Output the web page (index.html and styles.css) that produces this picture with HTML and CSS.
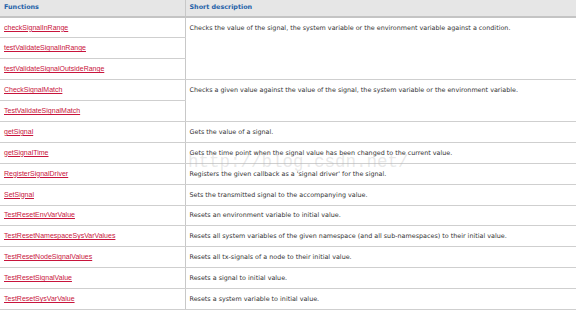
FILE: index.html
```html
<!DOCTYPE html>
<html lang="en">
<head>
    <meta charset="UTF-8">
    <title>Functions</title>
    <link rel="stylesheet" href="styles.css">
</head>
<body>
    <div class="wrap">
        <table class="func-table">
            <thead>
                <tr>
                    <th class="col-name">Functions</th>
                    <th>Short description</th>
                </tr>
            </thead>
            <tbody>
                <tr>
                    <td><a href="#">checkSignalInRange</a></td>
                    <td rowspan="3" class="top">Checks the value of the signal, the system variable or the environment variable against a condition.</td>
                </tr>
                <tr><td><a href="#">testValidateSignalInRange</a></td></tr>
                <tr><td><a href="#">testValidateSignalOutsideRange</a></td></tr>
                <tr>
                    <td><a href="#">CheckSignalMatch</a></td>
                    <td rowspan="2" class="top">Checks a given value against the value of the signal, the system variable or the environment variable.</td>
                </tr>
                <tr><td><a href="#">TestValidateSignalMatch</a></td></tr>
                <tr><td><a href="#">getSignal</a></td><td>Gets the value of a signal.</td></tr>
                <tr><td><a href="#">getSignalTime</a></td><td>Gets the time point when the signal value has been changed to the current value.</td></tr>
                <tr><td><a href="#">RegisterSignalDriver</a></td><td>Registers the given callback as a 'signal driver' for the signal.</td></tr>
                <tr><td><a href="#">SetSignal</a></td><td>Sets the transmitted signal to the accompanying value.</td></tr>
                <tr><td><a href="#">TestResetEnvVarValue</a></td><td>Resets an environment variable to initial value.</td></tr>
                <tr><td><a href="#">TestResetNamespaceSysVarValues</a></td><td>Resets all system variables of the given namespace (and all sub-namespaces) to their initial value.</td></tr>
                <tr><td><a href="#">TestResetNodeSignalValues</a></td><td>Resets all tx-signals of a node to their initial value.</td></tr>
                <tr><td><a href="#">TestResetSignalValue</a></td><td>Resets a signal to initial value.</td></tr>
                <tr><td><a href="#">TestResetSysVarValue</a></td><td>Resets a system variable to initial value.</td></tr>
            </tbody>
        </table>
        <div class="watermark">http://blog.csdn.net/</div>
    </div>
</body>
</html>
```

FILE: styles.css
```css
* {
    margin: 0;
    padding: 0;
    box-sizing: border-box;
}

body {
    background: #fff;
    font-family: 'DejaVu Sans', sans-serif;
}

.wrap {
    position: relative;
    width: 576px;
}

.func-table {
    width: 576px;
    border-collapse: collapse;
    table-layout: fixed;
}

.func-table th {
    background: #e6e6e6;
    color: #2461a8;
    font-size: 6.4px;
    font-weight: bold;
    text-align: left;
    height: 17px;
    padding: 0 4px 3px;
    border-bottom: 2px solid #c4c4c4;
}

.func-table th.col-name {
    width: 185px;
    border-right: 1px solid #c8c8c8;
}

.func-table td {
    height: 20.9px;
    padding: 0 4px;
    font-size: 6.4px;
    color: #333;
    border-bottom: 1px solid #cfcfcf;
    vertical-align: middle;
    white-space: nowrap;
}

.func-table td:first-child {
    border-right: 1px solid #c8c8c8;
}

.func-table td.top {
    vertical-align: top;
    padding-top: 6px;
}

.func-table a {
    font-family: 'Liberation Sans', sans-serif;
    font-size: 7px;
    color: #c8143c;
    text-decoration: underline;
}

.watermark {
    position: absolute;
    left: 188px;
    top: 152px;
    font-family: 'Liberation Mono', monospace;
    font-size: 17.5px;
    color: rgba(180, 180, 180, 0.3);
    pointer-events: none;
}
```
